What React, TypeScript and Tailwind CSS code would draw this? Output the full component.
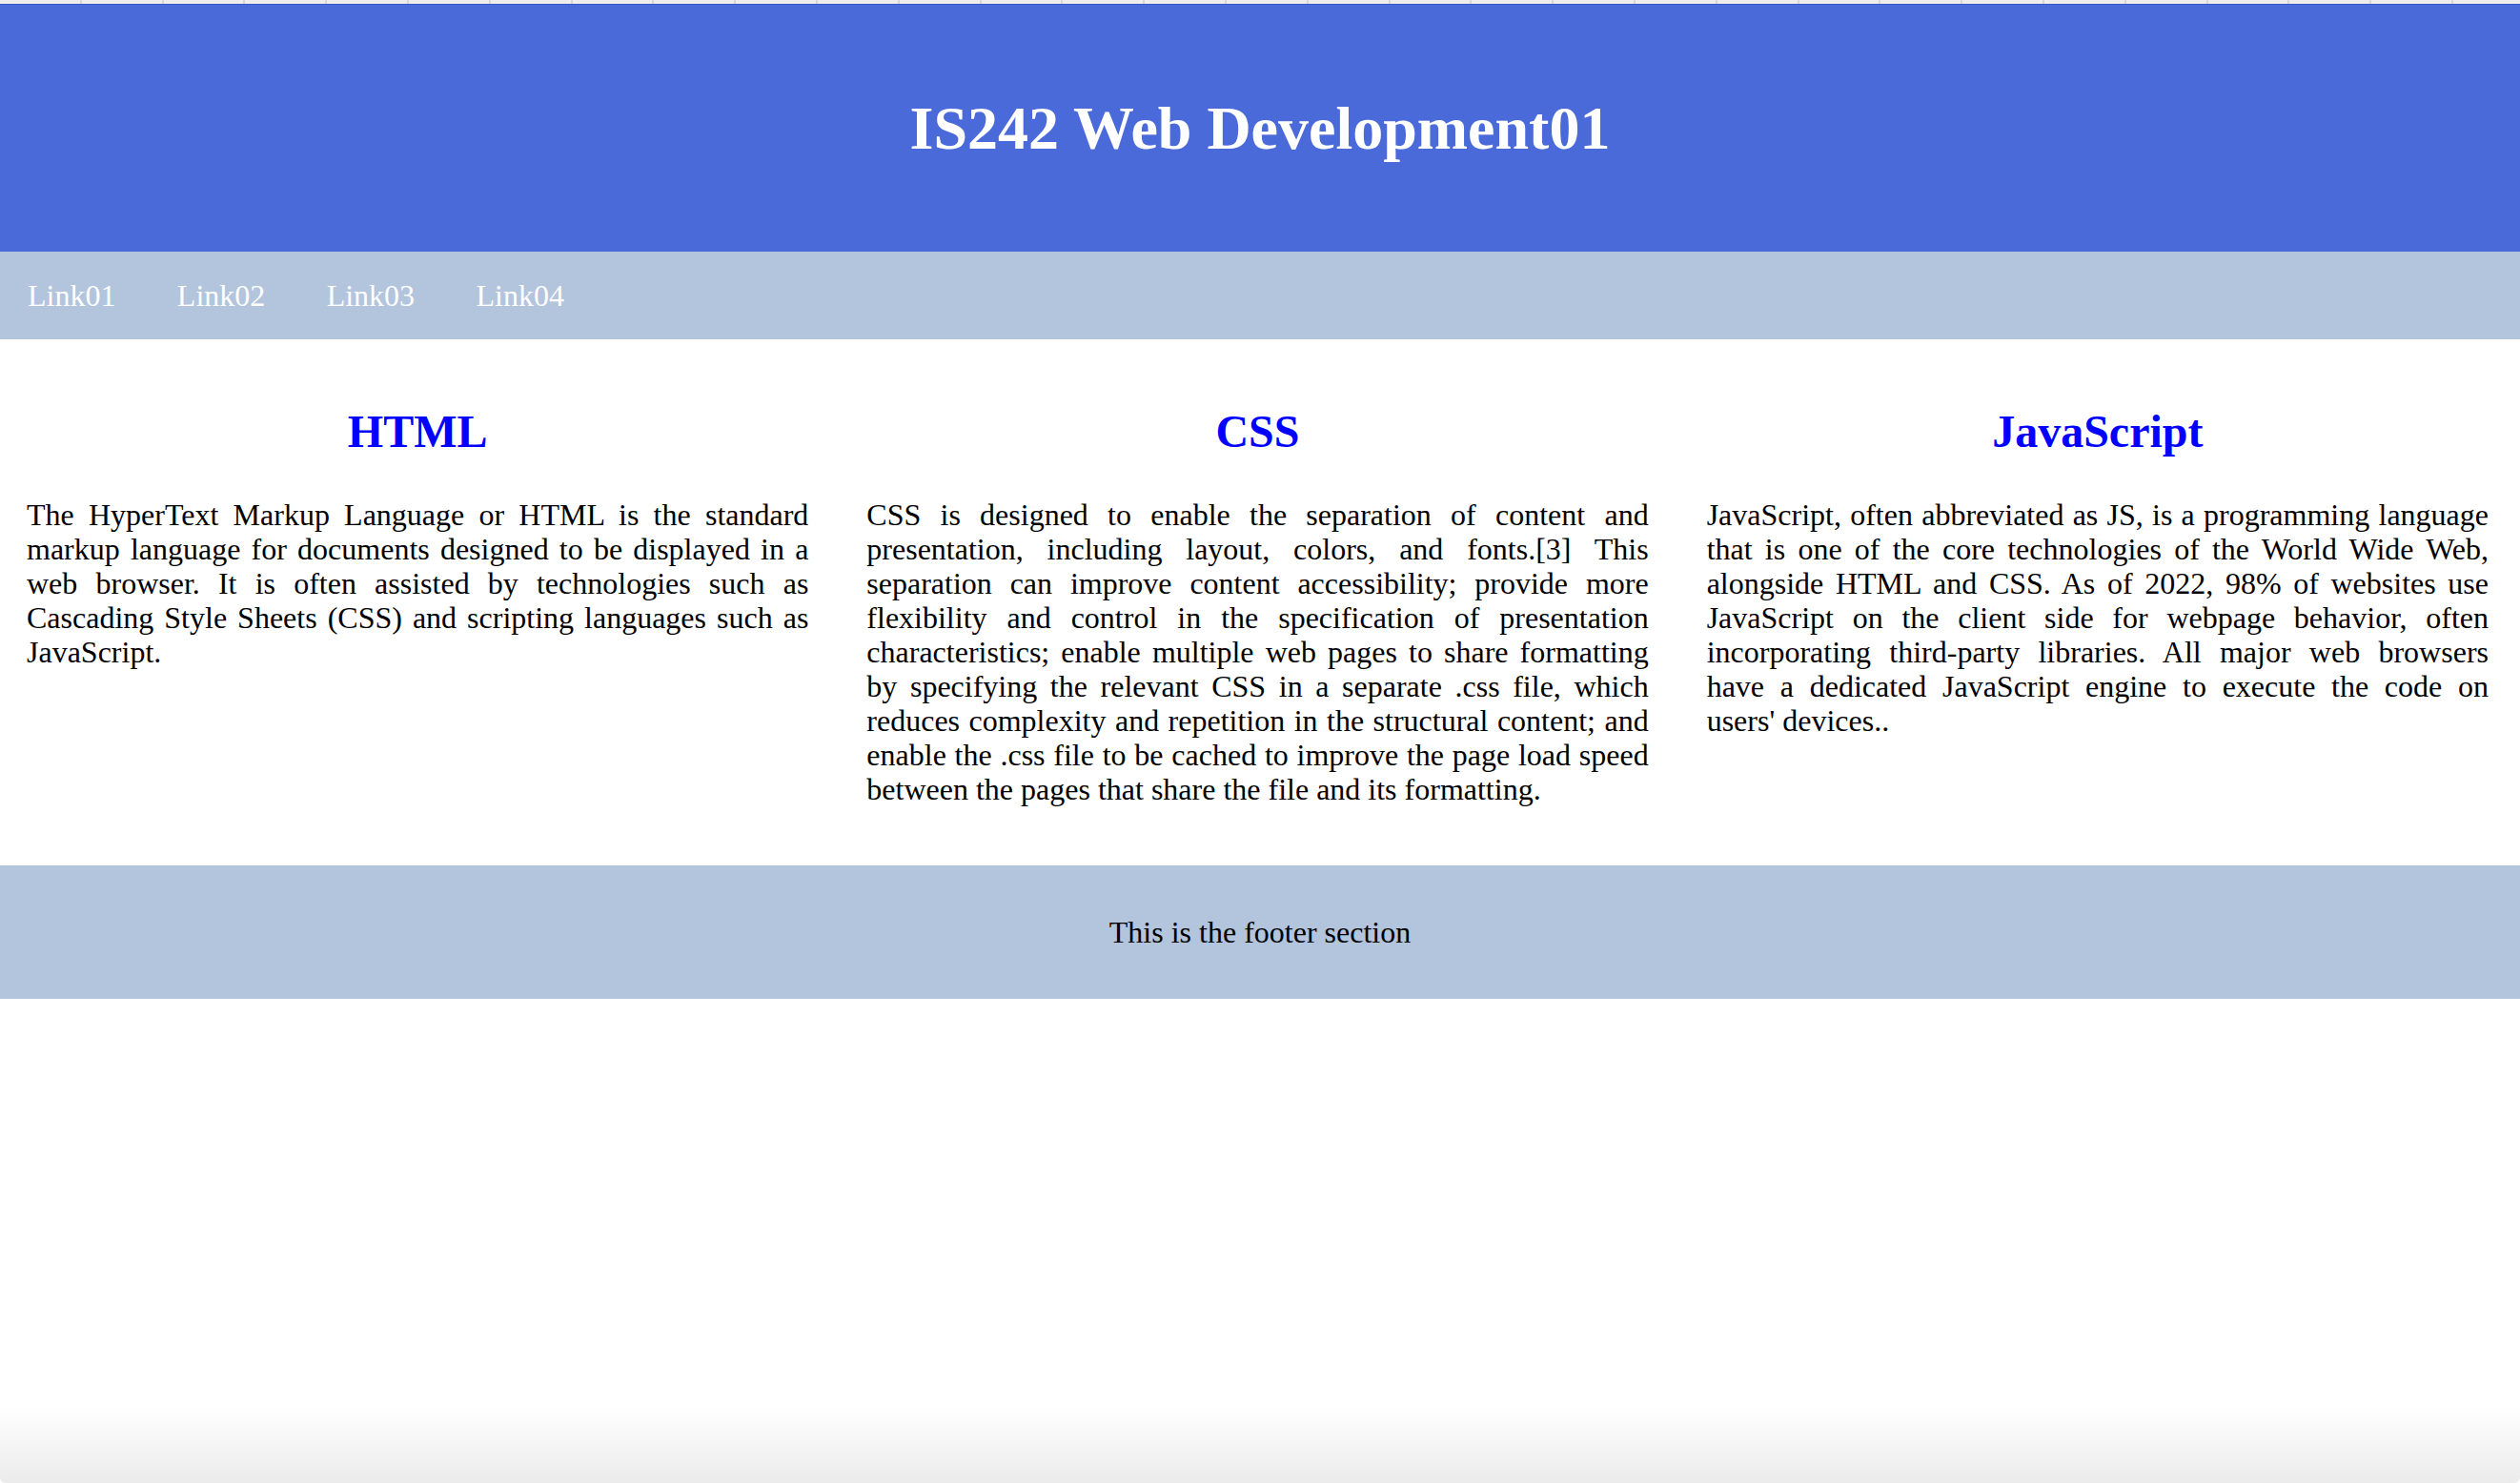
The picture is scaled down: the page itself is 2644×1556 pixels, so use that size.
const links = ["Link01", "Link02", "Link03", "Link04"];

const topics = [
  {
    title: "HTML",
    text: "The HyperText Markup Language or HTML is the standard markup language for documents designed to be displayed in a web browser. It is often assisted by technologies such as Cascading Style Sheets (CSS) and scripting languages such as JavaScript.",
  },
  {
    title: "CSS",
    text: "CSS is designed to enable the separation of content and presentation, including layout, colors, and fonts.[3] This separation can improve content accessibility; provide more flexibility and control in the specification of presentation characteristics; enable multiple web pages to share formatting by specifying the relevant CSS in a separate .css file, which reduces complexity and repetition in the structural content; and enable the .css file to be cached to improve the page load speed between the pages that share the file and its formatting.",
  },
  {
    title: "JavaScript",
    text: "JavaScript, often abbreviated as JS, is a programming language that is one of the core technologies of the World Wide Web, alongside HTML and CSS. As of 2022, 98% of websites use JavaScript on the client side for webpage behavior, often incorporating third-party libraries. All major web browsers have a dedicated JavaScript engine to execute the code on users' devices..",
  },
];

const TabStrip = () => (
  <div className="flex h-[4px] bg-[#efeeec]">
    {Array.from({ length: 31 }).map((_, i) => (
      <div key={i} className="h-full w-[85.8px] shrink-0 border-r-2 border-[#d9d8d6]" />
    ))}
  </div>
);

export default function App() {
  return (
    <div className="flex h-[1556px] w-[2644px] flex-col overflow-hidden bg-white font-['Liberation_Serif','Times_New_Roman',serif] text-black">
      <TabStrip />
      <header className="flex h-[260px] items-center justify-center border-t border-[#3a57c8] bg-[#4a6ada]">
        <h1 className="text-[64px] leading-[74px] font-bold text-white">IS242 Web Development01</h1>
      </header>

      <nav className="flex h-[92px] items-center gap-[64.4px] bg-[#b3c4dd] pl-[29px]">
        {links.map((l) => (
          <a key={l} href="#" className="text-[32px] leading-[37px] text-white">
            {l}
          </a>
        ))}
      </nav>

      <main className="flex h-[552px] pt-[69px]">
        {topics.map((t) => (
          <section key={t.title} className="w-1/3 pl-[28px] pr-[33px]">
            <h2 className="text-center text-[48px] leading-[55px] font-bold text-[#0000ff]">{t.title}</h2>
            <p className="mt-[42px] text-justify text-[32px] leading-[36px]">{t.text}</p>
          </section>
        ))}
      </main>

      <footer className="flex h-[140px] items-center justify-center bg-[#b3c4dd]">
        <p className="text-[32px] leading-[37px]">This is the footer section</p>
      </footer>

      <div className="flex-1" />
      <div className="h-[80px] rounded-b-[6px] bg-gradient-to-b from-white to-[#ebebeb]" />
    </div>
  );
}
